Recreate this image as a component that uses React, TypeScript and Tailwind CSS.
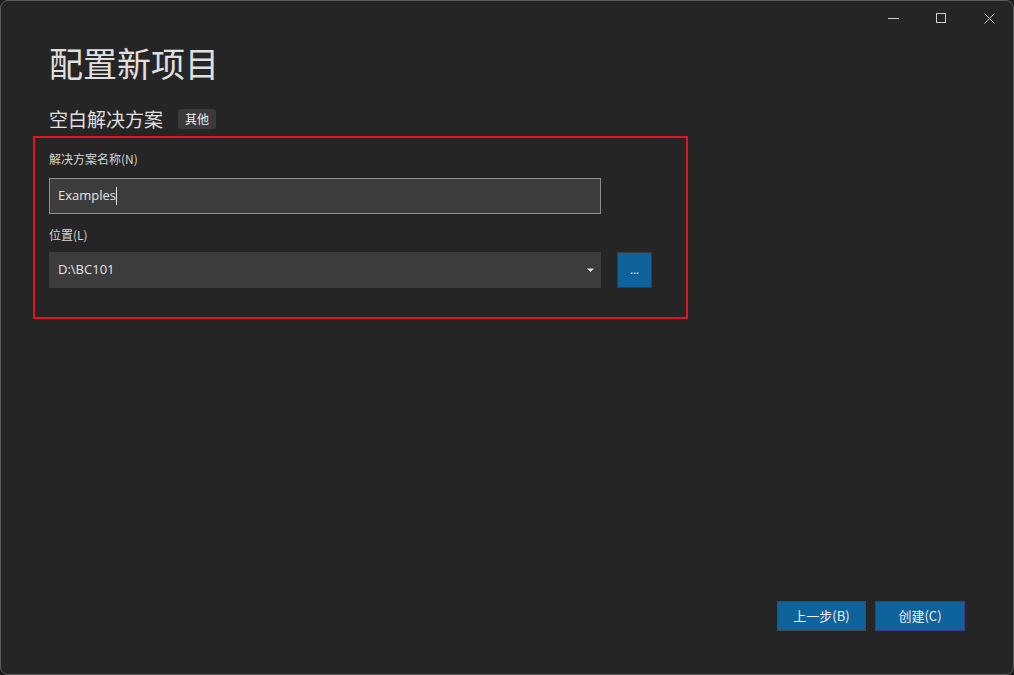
const font = { fontFamily: '"Noto Sans CJK SC", "Noto Sans", sans-serif' };
const latin = { fontFamily: '"Open Sans", "Noto Sans", sans-serif' };

export default function App() {
  return (
    <div className="w-[1014px] h-[675px] bg-[#1b1b1b]" style={font}>
      <div className="relative w-full h-full rounded-[8px] border border-[#5c5c5c] bg-[#252525] overflow-hidden">
        {/* window controls */}
        <div className="absolute top-0 right-0 flex h-[34px] items-center text-[#cccccc]">
          <div className="w-[48px] flex justify-center">
            <div className="w-[11px] h-px bg-[#cccccc]" />
          </div>
          <div className="w-[48px] flex justify-center">
            <div className="w-[10px] h-[10px] border border-[#cccccc]" />
          </div>
          <div className="w-[48px] flex justify-center">
            <svg width="11" height="11" viewBox="0 0 11 11" stroke="#cccccc" strokeWidth="1">
              <path d="M0.5 0.5 L10.5 10.5 M10.5 0.5 L0.5 10.5" />
            </svg>
          </div>
        </div>

        <div className="pl-[48px] pt-[38px]">
          <h1 className="text-[34px] leading-[48px] text-[#e0e0e0] font-normal">配置新项目</h1>
          <div className="mt-[19px] flex items-center gap-[15px]">
            <span className="text-[19px] leading-[26px] text-[#e0e0e0]">空白解决方案</span>
            <span className="px-[7px] h-[20px] leading-[20px] rounded-[3px] bg-[#3a3a3c] text-[12px] text-[#f0f0f0]">其他</span>
          </div>
        </div>

        <div className="ml-[32px] mt-[4px] w-[655px] h-[183px] border-2 border-[#e81123] pl-[14px] pt-[12px]">
          <div className="text-[12px] leading-[18px] text-[#d6d6d6]">解决方案名称(N)</div>
          <div className="mt-[10px] w-[552px] h-[36px] border border-[#8f8f8f] bg-[#3c3c3c] flex items-center pl-[8px]">
            <span className="text-[13px] text-[#e6e6e6]" style={latin}>Examples</span>
            <span className="w-px h-[18px] bg-[#e6e6e6]" />
          </div>
          <div className="mt-[12px] text-[12px] leading-[18px] text-[#d6d6d6]">位置(L)</div>
          <div className="mt-[8px] flex gap-[16px]">
            <div className="w-[552px] h-[36px] bg-[#3c3c3c] flex items-center justify-between pl-[9px] pr-[6px]">
              <span className="text-[13px] text-[#e6e6e6]" style={latin}>D:\BC101</span>
              <svg width="8" height="5" viewBox="0 0 8 5"><path d="M0 0.5 H7 L3.5 4 Z" fill="#e6e6e6" /></svg>
            </div>
            <div className="w-[35px] h-[36px] bg-[#0e639c] border border-[#3c3c3c] flex items-center justify-center text-[11px] text-white leading-none pb-[2px]">...</div>
          </div>
        </div>

        <div className="absolute right-[48px] bottom-[43px] flex gap-[9px]">
          <button className="w-[89px] h-[30px] bg-[#0e639c] border border-[#3e4a55] text-[13px] text-[#f0f0f0]">上一步(B)</button>
          <button className="w-[90px] h-[30px] bg-[#0e639c] border border-[#3d3a8c] text-[13px] text-[#f0f0f0]">创建(C)</button>
        </div>
      </div>
    </div>
  );
}
